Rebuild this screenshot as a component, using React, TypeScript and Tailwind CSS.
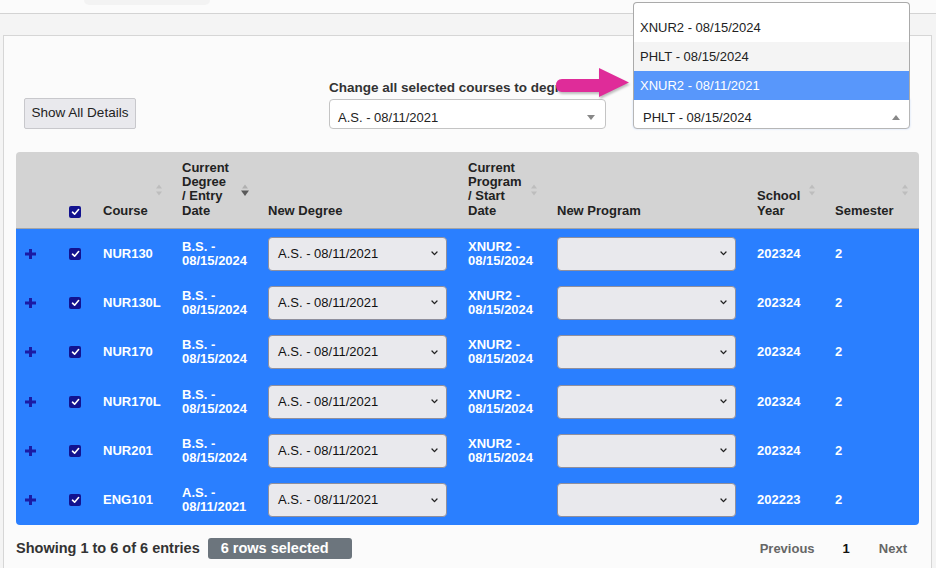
import React from 'react';

type Row = {
  course: string;
  degree: [string, string];
  program: [string, string] | null;
  year: string;
  semester: string;
  tall?: boolean;
};

const rows: Row[] = [
  { course: 'NUR130', degree: ['B.S. -', '08/15/2024'], program: ['XNUR2 -', '08/15/2024'], year: '202324', semester: '2' },
  { course: 'NUR130L', degree: ['B.S. -', '08/15/2024'], program: ['XNUR2 -', '08/15/2024'], year: '202324', semester: '2' },
  { course: 'NUR170', degree: ['B.S. -', '08/15/2024'], program: ['XNUR2 -', '08/15/2024'], year: '202324', semester: '2', tall: true },
  { course: 'NUR170L', degree: ['B.S. -', '08/15/2024'], program: ['XNUR2 -', '08/15/2024'], year: '202324', semester: '2' },
  { course: 'NUR201', degree: ['B.S. -', '08/15/2024'], program: ['XNUR2 -', '08/15/2024'], year: '202324', semester: '2' },
  { course: 'ENG101', degree: ['A.S. -', '08/11/2021'], program: null, year: '202223', semester: '2', tall: true },
];

const cols = 'grid grid-cols-[45px_34px_79px_86px_200px_89px_200px_78px_1fr] pl-[8px]';

function Check() {
  return (
    <span className="flex h-[12px] w-[12px] items-center justify-center rounded-[2px] bg-[#12128f]">
      <svg width="9" height="8" viewBox="0 0 9 8" fill="none">
        <path d="M1.5 4.2 L3.6 6.2 L7.6 1.6" stroke="#fff" strokeWidth="1.6" strokeLinecap="round" strokeLinejoin="round" />
      </svg>
    </span>
  );
}

function Plus() {
  return (
    <svg width="11" height="10" viewBox="0 0 11 10" className="ml-[1px]">
      <rect x="0" y="3.5" width="11" height="3" fill="#1b1ba3" />
      <rect x="4" y="0" width="3" height="10" fill="#1b1ba3" />
    </svg>
  );
}

function Sort({ active = false }: { active?: boolean }) {
  return (
    <svg
      width="8"
      height="13"
      viewBox="0 0 8 13"
      className="absolute top-1/2 -translate-y-1/2 right-[19px]"
    >
      <path d="M1 5 L4 1 L7 5 Z" fill={active ? '#b0b0b0' : '#bdbdbd'} />
      <path d={active ? 'M0 7 L4 12.5 L8 7 Z' : 'M1 8 L4 12 L7 8 Z'} fill={active ? '#5a5a5a' : '#bdbdbd'} />
    </svg>
  );
}

function NativeSelect({ value }: { value?: string }) {
  return (
    <div className="flex h-[34px] w-[179px] items-center justify-between rounded-[4px] border border-[#8f8f9d] bg-[#e9e9ed] pl-[9px] pr-[8px] text-[13px] font-normal text-[#111]">
      <span>{value ?? ''}</span>
      <svg width="7" height="5" viewBox="0 0 7 5" fill="none">
        <path d="M1 1 L3.5 3.6 L6 1" stroke="#222" strokeWidth="1.3" strokeLinecap="round" strokeLinejoin="round" />
      </svg>
    </div>
  );
}

export default function App() {
  return (
    <div className="relative h-[568px] w-[936px] overflow-hidden bg-[#fbfbfb] font-['Liberation_Sans',Arial,sans-serif] text-[#222]">
      {/* top strip */}
      <div className="h-[14px] border-b border-[#d3d3d3] bg-[#fbfbfb]">
        <div className="ml-[84px] h-[5px] w-[126px] rounded-b-full bg-[#f3f3f3]" />
      </div>

      <div className="bg-[#f4f4f4] pl-[3px] pt-[21px]">
        <div className="w-[929px] border-l border-r border-t border-[#d6d6d6] bg-[#fbfbfb] px-[12px]">
          {/* controls */}
          <div className="flex h-[93px] items-end">
            <button className="ml-[8px] h-[31px] w-[112px] rounded-[2px] border border-[#c8c8cc] bg-[#e9e9ed] text-[13.5px] text-[#222]">
              Show All Details
            </button>
            <div className="ml-[193px] flex flex-col">
              <label className="mb-[3px] text-[13.5px] font-bold leading-[17px] text-[#333]">
                Change all selected courses to degree:
              </label>
              <div className="flex h-[30px] w-[277px] items-center justify-between rounded-[4px] border border-[#c4c4c4] bg-white pl-[8px] pr-[10px] pt-[7px] text-[13px] text-[#222]">
                <span>A.S. - 08/11/2021</span>
                <svg width="8" height="5" viewBox="0 0 8 5">
                  <path d="M0 0 L8 0 L4 5 Z" fill="#888" />
                </svg>
              </div>
            </div>
            <div className="ml-[27px] flex h-[30px] w-[277px] items-center justify-between rounded-b-[4px] border border-[#b6b6b6] bg-white pl-[9px] pr-[9px] pt-[7px] text-[13px] text-[#222] shadow-[0_0_2px_rgba(88,151,251,0.35)]">
              <span>PHLT - 08/15/2024</span>
              <svg width="8" height="5" viewBox="0 0 8 5">
                <path d="M0 5 L8 5 L4 0 Z" fill="#888" />
              </svg>
            </div>
          </div>

          {/* table */}
          <div className="mt-[23px] w-[903px] overflow-hidden rounded-[4px]">
            <div className={`${cols} h-[77px] border-b border-[#a5a5a5] bg-[#d3d3d3] text-[13px] font-bold leading-[14.3px] text-[#222]`}>
              <div />
              <div className="flex items-end pb-[10px]">
                <Check />
              </div>
              <div className="relative flex items-end pb-[10px]">
                Course
                <Sort />
              </div>
              <div className="relative flex items-end pb-[10px]">
                <span>
                  Current
                  <br />
                  Degree
                  <br />/ Entry
                  <br />
                  Date
                </span>
                <Sort active />
              </div>
              <div className="flex items-end pb-[10px]">New Degree</div>
              <div className="relative flex items-end pb-[10px]">
                <span>
                  Current
                  <br />
                  Program
                  <br />/ Start
                  <br />
                  Date
                </span>
                <Sort />
              </div>
              <div className="flex items-end pb-[10px]">New Program</div>
              <div className="relative flex items-end pb-[10px]">
                <span>
                  School
                  <br />
                  Year
                </span>
                <Sort />
              </div>
              <div className="relative flex items-end pb-[10px]">
                Semester
                <svg width="8" height="13" viewBox="0 0 8 13" className="absolute right-[10px] top-1/2 -translate-y-1/2">
                  <path d="M1 5 L4 1 L7 5 Z" fill="#bdbdbd" />
                  <path d="M1 8 L4 12 L7 8 Z" fill="#bdbdbd" />
                </svg>
              </div>
            </div>

            {rows.map((r) => (
              <div
                key={r.course}
                className={`${cols} ${r.tall ? 'h-[50px]' : 'h-[49px]'} items-center bg-[#2a7fff] text-[13px] font-bold leading-[14px] text-white`}
              >
                <div className="flex items-center">
                  <Plus />
                </div>
                <div className="flex items-center">
                  <Check />
                </div>
                <div>{r.course}</div>
                <div>
                  {r.degree[0]}
                  <br />
                  {r.degree[1]}
                </div>
                <div>
                  <NativeSelect value="A.S. - 08/11/2021" />
                </div>
                <div>
                  {r.program && (
                    <>
                      {r.program[0]}
                      <br />
                      {r.program[1]}
                    </>
                  )}
                </div>
                <div>
                  <NativeSelect />
                </div>
                <div>{r.year}</div>
                <div>{r.semester}</div>
              </div>
            ))}
          </div>

          {/* footer */}
          <div className="flex h-[47px] w-[903px] items-center">
            <span className="text-[14.5px] font-bold text-[#333]">Showing 1 to 6 of 6 entries</span>
            <span className="ml-[8px] flex h-[21px] w-[144px] items-center rounded-[3px] bg-[#6c757d] pl-[13px] text-[14.5px] font-bold text-white">
              6 rows selected
            </span>
            <div className="ml-auto flex items-center text-[13px] font-bold">
              <span className="text-[#666]">Previous</span>
              <span className="ml-[28px] text-[#111]">1</span>
              <span className="ml-[29px] mr-[12px] text-[#666]">Next</span>
            </div>
          </div>
        </div>
      </div>

      {/* open dropdown list */}
      <div className="absolute left-[633px] top-[2px] w-[277px] rounded-t-[4px] border border-b-0 border-[#aaa] bg-white pt-[10px] text-[13px] text-[#222]">
        <div className="flex h-[29px] items-center px-[6px]">XNUR2 - 08/15/2024</div>
        <div className="flex h-[29px] items-center bg-[#f4f4f4] px-[6px]">PHLT - 08/15/2024</div>
        <div className="flex h-[29px] items-center bg-[#5897fb] px-[6px] text-white">XNUR2 - 08/11/2021</div>
      </div>

      {/* annotation arrow */}
      <svg
        width="86"
        height="42"
        viewBox="0 0 86 42"
        className="absolute left-[550px] top-[62px] drop-shadow-[1px_2px_1px_rgba(0,0,0,0.25)]"
      >
        <path d="M12 17 H49 V6 L79 20.5 L49 35 V30 H12 Q6 30 6 23.5 Q6 17 12 17 Z" fill="#df2c99" />
      </svg>
    </div>
  );
}
